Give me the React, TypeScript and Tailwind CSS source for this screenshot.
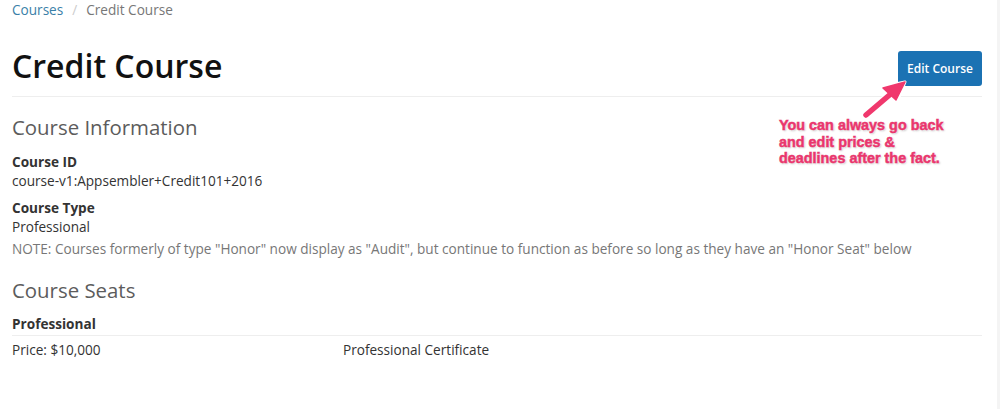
export default function App() {
  return (
    <div className="flex min-h-[409px] bg-white font-['Open_Sans',sans-serif] text-[#333]">
      <div className="relative flex-1 pl-3 pr-[15px]">
        {/* breadcrumb */}
        <div className="flex h-5 items-center gap-[9px] text-[13.6px] leading-5">
          <span className="text-[#3a7fa8]">Courses</span>
          <span className="text-[#ccc]">/</span>
          <span className="text-[#777]">Credit Course</span>
        </div>

        {/* header */}
        <div className="mt-[26px] flex items-end justify-between border-b border-[#eee] pb-[9px]">
          <h1 className="mb-px text-[32px] font-semibold leading-10 text-[#111]">Credit Course</h1>
          <button className="mb-px h-[35px] w-[84px] rounded-[3px] bg-[#1b72b3] text-[12px] font-semibold text-white">
            Edit Course
          </button>
        </div>

        {/* course info */}
        <h2 className="mt-[16px] text-[20.4px] leading-7 text-[#5c5c5c]">Course Information</h2>
        <div className="mt-[11px] text-[13.6px] leading-[19px]">
          <div className="font-bold">Course ID</div>
          <div>course-v1:Appsembler+Credit101+2016</div>
          <div className="mt-[8px] font-bold">Course Type</div>
          <div>Professional</div>
          <div className="mt-[3px] text-[#777]">
            NOTE: Courses formerly of type "Honor" now display as "Audit", but continue to function as before so long as they have an "Honor Seat" below
          </div>
        </div>

        {/* seats */}
        <h2 className="mt-[18px] text-[20.4px] leading-7 text-[#5c5c5c]">Course Seats</h2>
        <div className="mt-[10px] border-b border-[#eee] pb-[2px] text-[13.6px] font-bold leading-[19px]">Professional</div>
        <div className="mt-[4px] flex text-[13.6px] leading-[19px]">
          <div className="w-[331px]">Price: $10,000</div>
          <div>Professional Certificate</div>
        </div>

        {/* annotation */}
        <svg className="absolute left-[855px] top-[75px]" width="60" height="50" viewBox="0 0 60 50">
          <path d="M11 40 L38 17" stroke="#fff" strokeWidth="8" strokeLinecap="round" />
          <path d="M50 7 L26 12 L42 27 Z" fill="#fff" stroke="#fff" strokeWidth="3" strokeLinejoin="round" />
          <path d="M11 40 L38 17" stroke="#f0386d" strokeWidth="5.5" strokeLinecap="round" />
          <path d="M50 7 L28 13 L41 25 Z" fill="#f0386d" stroke="#f0386d" strokeWidth="1.5" strokeLinejoin="round" />
        </svg>
        <div className="absolute left-[779px] top-[117px] font-['Liberation_Sans',Arial,sans-serif] text-[14.4px] font-bold leading-[16.5px] text-[#e9366d] [-webkit-text-stroke:0.5px_#e9366d] [text-shadow:0_0_1px_#fff,0_0_2px_#fff,1px_1px_2px_rgba(0,0,0,0.25)]">
          You can always go back
          <br />
          and edit prices &amp;
          <br />
          deadlines after the fact.
        </div>
      </div>
      <div className="w-[3px] bg-[#f4f4f4]" />
    </div>
  );
}
